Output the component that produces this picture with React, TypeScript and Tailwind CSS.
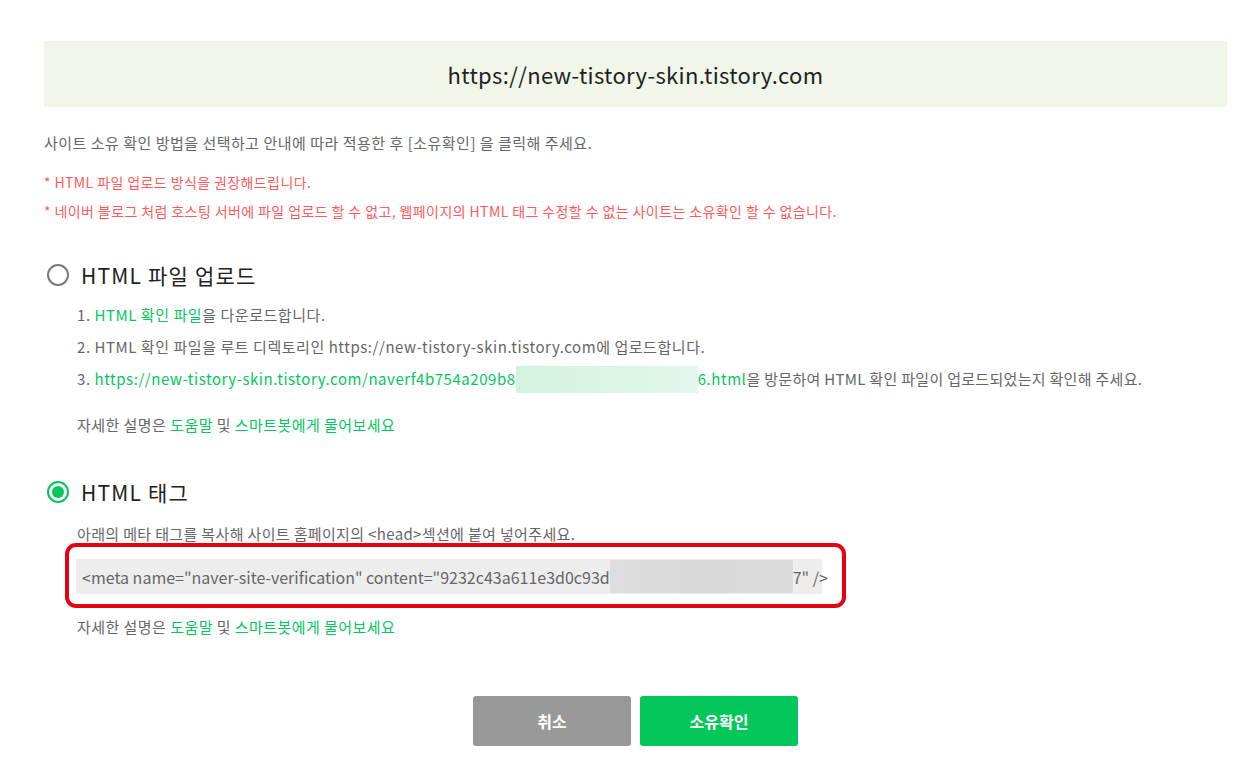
import React from "react";

const font = { fontFamily: '"Noto Sans CJK KR", "Noto Sans", sans-serif' };

function Radio({ checked }: { checked: boolean }) {
  return checked ? (
    <span className="flex h-[22px] w-[22px] shrink-0 items-center justify-center rounded-full border-[2px] border-[#03c75a] bg-white">
      <span className="h-[12px] w-[12px] rounded-full bg-[#03c75a]" />
    </span>
  ) : (
    <span className="h-[22px] w-[22px] shrink-0 rounded-full border-[2px] border-[#7a7a7a] bg-white" />
  );
}

function Help() {
  return (
    <p className="text-[15px] leading-[20px] text-[#666] tracking-[0.45px]">
      자세한 설명은 <span className="text-[#03c75a]">도움말</span> 및{" "}
      <span className="text-[#03c75a]">스마트봇에게 물어보세요</span>
    </p>
  );
}

export default function App() {
  return (
    <div className="min-h-[776px] w-[1246px] bg-white pl-[44px] pr-[19px] pt-[41px]" style={font}>
      <div className="flex h-[66px] items-center justify-center bg-[#f0f6e8] text-[22px] text-[#222] tracking-[0.35px]">
        https://new-tistory-skin.tistory.com
      </div>

      <p className="mt-[26px] text-[15px] leading-[20px] text-[#666] tracking-[0.5px]">
        사이트 소유 확인 방법을 선택하고 안내에 따라 적용한 후 [소유확인] 을 클릭해 주세요.
      </p>
      <p className="mt-[20px] text-[14px] leading-[18px] text-[#ff5a5a] tracking-[0.4px]">
        * HTML 파일 업로드 방식을 권장해드립니다.
      </p>
      <p className="mt-[11px] text-[14px] leading-[18px] text-[#ff5a5a] tracking-[0.4px]">
        * 네이버 블로그 처럼 호스팅 서버에 파일 업로드 할 수 없고, 웹페이지의 HTML 태그 수정할 수 없는 사이트는 소유확인 할 수 없습니다.
      </p>

      <div className="mt-[42px] flex items-center gap-[12px] pl-[3px]">
        <Radio checked={false} />
        <span className="text-[21px] leading-[26px] text-[#222] tracking-[1.2px]">HTML 파일 업로드</span>
      </div>

      <div className="mt-[17px] flex flex-col gap-[12px] pl-[33px] text-[15px] leading-[20px] text-[#666] tracking-[0.55px]">
        <p>
          1. <span className="text-[#03c75a]">HTML 확인 파일</span>을 다운로드합니다.
        </p>
        <p>2. HTML 확인 파일을 루트 디렉토리인 https://new-tistory-skin.tistory.com에 업로드합니다.</p>
        <p className="flex h-[20px] items-center whitespace-nowrap">
          <span>3.&nbsp;</span>
          <span className="text-[#03c75a]">https://new-tistory-skin.tistory.com/naverf4b754a209b8</span>
          <span className="h-[27px] w-[182px] shrink-0 bg-gradient-to-r from-[#d2f2e0] to-[#e3f7ec]" />
          <span className="text-[#03c75a]">6.html</span>
          <span className="tracking-[0.3px]">을 방문하여 HTML 확인 파일이 업로드되었는지 확인해 주세요.</span>
        </p>
        <div className="mt-[14px]">
          <Help />
        </div>
      </div>

      <div className="mt-[44px] flex items-center gap-[12px] pl-[3px]">
        <Radio checked={true} />
        <span className="text-[21px] leading-[26px] text-[#222] tracking-[1.2px]">HTML 태그</span>
      </div>

      <div className="pl-[32px]">
        <p className="mt-[19px] pl-[1px] text-[15px] leading-[20px] text-[#666] tracking-[0.35px]">
          아래의 메타 태그를 복사해 사이트 홈페이지의 &lt;head&gt;섹션에 붙여 넣어주세요.
        </p>
        <div className="relative mt-[15px] w-[746px]">
          <div className="flex h-[35px] items-center whitespace-nowrap bg-[#ededed] pl-[6px] text-[16px] text-[#666]">
            <span>&lt;meta name="naver-site-verification" content="9232c43a611e3d0c93d</span>
            <span className="h-[33px] w-[183px] shrink-0 bg-gradient-to-r from-[#dedede] via-[#d8d8d8] to-[#dcdcdc]" />
            <span>7" /&gt;</span>
          </div>
          <div className="pointer-events-none absolute left-[-11px] top-[-16px] h-[65px] w-[781px] rounded-[11px] border-[4px] border-[#e60012]" />
        </div>
        <div className="mt-[23px] pl-[1px]">
          <Help />
        </div>
      </div>

      <div className="mt-[59px] flex justify-center gap-[9px]">
        <button className="h-[50px] w-[158px] rounded-[3px] bg-[#999] text-[16px] font-bold text-white">취소</button>
        <button className="h-[50px] w-[158px] rounded-[3px] bg-[#03c75a] text-[16px] font-bold text-white">소유확인</button>
      </div>
    </div>
  );
}
